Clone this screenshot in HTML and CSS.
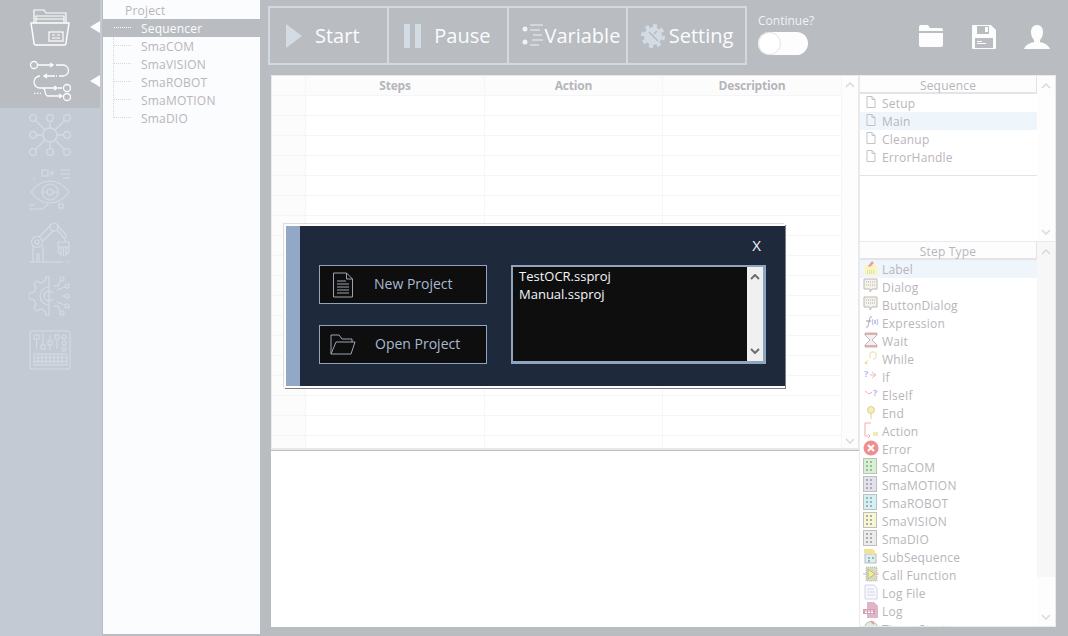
FILE: index.html
```html
<!DOCTYPE html>
<html lang="en">
<head>
<meta charset="utf-8">
<title>Sequencer</title>
<link rel="stylesheet" href="styles.css">
</head>
<body>
<div class="app">
  <nav class="rail">
    <div class="rail-item active">
      <svg class="rail-icon" viewBox="0 0 42 42" fill="none" stroke="currentColor" stroke-width="1.2"><path d="M5 17V4h10l2 3h20v10"/><path d="M7 17V10h28v7M7 13h28"/><path d="M2 17h38l-3 20a2 2 0 0 1-2 2H7a2 2 0 0 1-2-2z" stroke-width="1.5"/><rect x="20" y="26" width="14" height="9"/><path d="M23 29h3M28 29h3M23 32h8"/></svg>
    </div>
    <div class="rail-item active">
      <svg class="rail-icon" viewBox="0 0 42 42" fill="none" stroke="currentColor" stroke-width="1.3"><circle cx="5" cy="5" r="3.5"/><path d="M9 5h15M21 3l3 2-3 2M27 5h7a5.500 5.500 0 0 1 0 11h-4M18 14l-3 2 3 2M15 16h11M28 16h-1M11 16a6 6 0 0 0 0 12h17M25 26l3 2-3 2M29 28h4"/><path d="M14 28c3 0 1 8 5 8h14M30 34l3 2-3 2"/><path d="M5 33.300h7" stroke-dasharray="1.5 1.5"/><circle cx="38" cy="28" r="3.5"/><circle cx="38" cy="37" r="3.5"/></svg>
    </div>
    <div class="rail-item">
      <svg class="rail-icon dim" viewBox="0 0 42 42" fill="none" stroke="currentColor" stroke-width="1.3"><circle cx="21" cy="21" r="7"/><circle cx="4" cy="4" r="3.3"/><circle cx="21" cy="4" r="3.3"/><circle cx="38" cy="4" r="3.3"/><circle cx="4" cy="21" r="3.3"/><circle cx="38" cy="21" r="3.3"/><circle cx="4" cy="38" r="3.3"/><circle cx="21" cy="38" r="3.3"/><circle cx="38" cy="38" r="3.3"/><path d="M21 7v7M21 28v7M7 21h7M28 21h7M6.500 6.500l9.500 9.500M35.500 6.500l-9.500 9.500M6.500 35.500l9.500-9.500M35.500 35.500l-9.500-9.500"/></svg>
    </div>
    <div class="rail-item">
      <svg class="rail-icon dim" viewBox="0 0 42 42" fill="none" stroke="currentColor" stroke-width="1.2"><path d="M2 24c5-7 12-11 19-11s14 4 19 11c-5 7-12 11-19 11S7 31 2 24z"/><circle cx="21" cy="24" r="8"/><circle cx="21" cy="24" r="3"/><path d="M13 24h5M24 24h5"/><rect x="13" y="2" width="6" height="6"/><rect x="22" y="4" width="2" height="2"/><path d="M32 2h9M31 6h10M34 10h7M4 11h2M0 41h14l5-5M0 37h6"/><rect x="30" y="36" width="4" height="4"/></svg>
    </div>
    <div class="rail-item">
      <svg class="rail-icon dim" viewBox="0 0 42 42" fill="none" stroke="currentColor" stroke-width="1.2"><path d="M1 40h33M38 40h2M4 40V24M14 40V24M8 40v-8h2v8"/><circle cx="8" cy="20" r="5.500"/><circle cx="8" cy="20" r="2"/><path d="M10 15l12-12M14 19L25 8"/><circle cx="25" cy="5" r="4"/><path d="M28 8l8 9v3M28 3l9 10v3M29 20h11v5H29zM32 25v8l-3-3 1-5M37 25v8l3-3-1-5M34.500 25v9"/></svg>
    </div>
    <div class="rail-item">
      <svg class="rail-icon dim" viewBox="0 0 42 42" fill="none" stroke="currentColor" stroke-width="1.2"><path d="M20 1v38h-3l-1-4-4-2-4 2-3-3 2-4-2-4-5-1v-6l5-1 2-4-2-4 3-3 4 2 4-2 1-4z"/><path d="M20 11a9 9 0 0 0 0 18"/><path d="M20 15a5 5 0 0 0 0 10a5 5 0 0 0 4-2M20 15a5 5 0 0 1 4 2"/><circle cx="33" cy="3" r="2"/><circle cx="38" cy="10" r="2"/><circle cx="38" cy="20" r="2"/><circle cx="38" cy="30" r="2"/><circle cx="33" cy="37" r="2"/><path d="M31 5l-2 5h-5M36 11l-8 3M32 20h4M28 26l8 3M24 30h5l2 5"/></svg>
    </div>
    <div class="rail-item">
      <svg class="rail-icon dim" viewBox="0 0 42 42" fill="none" stroke="currentColor" stroke-width="1.1"><rect x="1" y="1" width="40" height="38" rx="2"/><rect x="5" y="5" width="5" height="4"/><rect x="12" y="15" width="4" height="4"/><rect x="19" y="11" width="4" height="4"/><rect x="26" y="5" width="4" height="4"/><circle cx="35" cy="7" r="2"/><circle cx="35" cy="13" r="2"/><circle cx="35" cy="19" r="2"/><path d="M7.500 9v10M14 3v12M21 5v6M21 15v5M28 9v10"/><path d="M5 24h33v11H5zM5 27.700h33M5 31.400h33M9 24v11M13 24v11M17 24v11M21 24v11M25 24v11M29 24v11M33 24v11"/></svg>
    </div>
  </nav>

  <aside class="tree">
    <div class="tree-root">Project</div>
    <ul class="tree-list">
      <li class="tree-row selected"><span>Sequencer</span></li>
      <li class="tree-row"><span>SmaCOM</span></li>
      <li class="tree-row"><span>SmaVISION</span></li>
      <li class="tree-row"><span>SmaROBOT</span></li>
      <li class="tree-row"><span>SmaMOTION</span></li>
      <li class="tree-row"><span>SmaDIO</span></li>
    </ul>
  </aside>

  <main class="main">
    <header class="topbar">
      <div class="toolbar">
        <button class="tool t-start"><svg class="tool-icon" viewBox="0 0 16 24"><path d="M0 0l16 12L0 24z"/></svg><span>Start</span></button>
        <button class="tool t-pause"><svg class="tool-icon pause" viewBox="0 0 18 24"><path d="M0 0h6v24H0zM11 0h6v24h-6z"/></svg><span>Pause</span></button>
        <button class="tool t-var"><svg class="tool-icon var" viewBox="0 0 22 24" fill="none" stroke="currentColor" stroke-width="1.2"><circle cx="3" cy="5" r="2.500" fill="currentColor" stroke="none"/><circle cx="3" cy="18" r="2.500" fill="currentColor" stroke="none"/><path d="M8 1h13M8 6h10M11 11h9M10 16h11M8 21h9"/></svg><span>Variable</span></button>
        <button class="tool t-set"><svg class="tool-icon gear" viewBox="0 0 24 24"><circle cx="12" cy="12" r="9"/><circle class="gear-teeth" cx="12" cy="12" r="10" pathLength="24" stroke-dasharray="1.500 1.500"/><path class="gear-cut" d="M8 8l9 9M16 7l-3 3"/></svg><span>Setting</span></button>
      </div>
      <div class="continue">
        <span class="continue-label">Continue?</span>
        <div class="toggle"><div class="knob"></div></div>
      </div>
      <div class="quick">
        <svg class="q-folder" viewBox="0 0 24 22"><path d="M0 2a2 2 0 0 1 2-2h7l2 3h11a2 2 0 0 1 2 2v1H0zM0 8h24v12a2 2 0 0 1-2 2H2a2 2 0 0 1-2-2z"/></svg>
        <svg class="q-save" viewBox="0 0 24 24"><path fill-rule="evenodd" d="M0 1a1 1 0 0 1 1-1h18l5 5v18a1 1 0 0 1-1 1H1a1 1 0 0 1-1-1zM5 1v8h12V1zM13 2h3v5h-3zM3 13v10h18V13zM5 16h5v1H5zM5 18h9v1H5z"/></svg>
        <svg class="q-user" viewBox="0 0 26 24"><path d="M13 0c4 0 6 3 6 7 0 3-1 6-3 8v2c3 1 8 2 10 7H0c2-5 7-6 10-7v-2c-2-2-3-5-3-8 0-4 2-7 6-7z"/></svg>
      </div>
    </header>

    <div class="workspace">
      <div class="center">
        <section class="steps">
          <table class="grid">
            <thead><tr><th class="corner"></th><th class="c-steps">Steps</th><th class="c-action">Action</th><th class="c-desc">Description</th></tr></thead>
            <tbody>
              <tr><td></td><td></td><td></td><td></td></tr>
              <tr><td></td><td></td><td></td><td></td></tr>
              <tr><td></td><td></td><td></td><td></td></tr>
              <tr><td></td><td></td><td></td><td></td></tr>
              <tr><td></td><td></td><td></td><td></td></tr>
              <tr><td></td><td></td><td></td><td></td></tr>
              <tr><td></td><td></td><td></td><td></td></tr>
              <tr><td></td><td></td><td></td><td></td></tr>
              <tr><td></td><td></td><td></td><td></td></tr>
              <tr><td></td><td></td><td></td><td></td></tr>
              <tr><td></td><td></td><td></td><td></td></tr>
              <tr><td></td><td></td><td></td><td></td></tr>
              <tr><td></td><td></td><td></td><td></td></tr>
              <tr><td></td><td></td><td></td><td></td></tr>
              <tr><td></td><td></td><td></td><td></td></tr>
              <tr><td></td><td></td><td></td><td></td></tr>
              <tr><td></td><td></td><td></td><td></td></tr>
              <tr><td></td><td></td><td></td><td></td></tr>
            </tbody>
          </table>
          <div class="vscroll">
            <svg class="chev" viewBox="0 0 10 6"><path d="M1 5l4-4 4 4"/></svg>
            <svg class="chev" viewBox="0 0 10 6"><path d="M1 1l4 4 4-4"/></svg>
          </div>
        </section>
        <section class="output"></section>
      </div>

      <div class="side">
        <section class="panel seq">
          <div class="panel-body">
            <div class="panel-head">Sequence</div>
            <ul class="items">
              <li class="item"><svg class="doc" viewBox="0 0 10 12"><path d="M1 .5h5l3 3v8H1zM6 .5v3h3"/></svg>Setup</li>
              <li class="item hot"><svg class="doc" viewBox="0 0 10 12"><path d="M1 .5h5l3 3v8H1zM6 .5v3h3"/></svg>Main</li>
              <li class="item"><svg class="doc" viewBox="0 0 10 12"><path d="M1 .5h5l3 3v8H1zM6 .5v3h3"/></svg>Cleanup</li>
              <li class="item"><svg class="doc" viewBox="0 0 10 12"><path d="M1 .5h5l3 3v8H1zM6 .5v3h3"/></svg>ErrorHandle</li>
            </ul>
            <div class="seq-rule"></div>
          </div>
          <div class="vscroll">
            <svg class="chev" viewBox="0 0 10 6"><path d="M1 5l4-4 4 4"/></svg>
            <svg class="chev" viewBox="0 0 10 6"><path d="M1 1l4 4 4-4"/></svg>
          </div>
        </section>

        <section class="panel types">
          <div class="panel-body">
            <div class="panel-head">Step Type</div>
            <ul class="items">
              <li class="item hot"><svg class="si" viewBox="0 0 16 16"><rect x="2" y="5" width="12" height="10" fill="#fdf6a6"/><path d="M4 11h8M4 13h8" stroke="#bbb" stroke-dasharray="1 1"/><path d="M5 6l4-5 2 2-4 4z" fill="#e58a94"/></svg>Label</li>
              <li class="item"><svg class="si" viewBox="0 0 16 16"><path d="M1 1h13v10H9l-2 3v-3H1z" fill="#f4f1e6" stroke="#aaa"/><path d="M3 4h9M3 7h9" stroke="#999" stroke-dasharray="1 1"/></svg>Dialog</li>
              <li class="item"><svg class="si" viewBox="0 0 16 16"><path d="M1 1h13v10H9l-2 3v-3H1z" fill="#f4f1e6" stroke="#aaa"/><path d="M3 4h9M3 7h9" stroke="#999" stroke-dasharray="1 1"/></svg>ButtonDialog</li>
              <li class="item"><svg class="si" viewBox="0 0 16 16" fill="none"><path d="M3 13c2 1 2-1 3-5s1-6 3-5M3 7h5" stroke="#888"/><path d="M10 5c-1 2-1 4 0 6M14 5c1 2 1 4 0 6M11 6l2 4M13 6l-2 4" stroke="#a6a6e8"/></svg>Expression</li>
              <li class="item"><svg class="si" viewBox="0 0 16 16"><path d="M2 1h12v2l-5 5 5 5v2H2v-2l5-5-5-5V1z" fill="#eee" stroke="#aaa"/><path d="M2 1h12v2H2zM2 13h12v2H2z" fill="#d99"/></svg>Wait</li>
              <li class="item"><svg class="si" viewBox="0 0 16 16" fill="none" stroke="#e9d58e"><path d="M7 8V4a2 2 0 0 1 2-2h2a2 2 0 0 1 2 2v3a2 2 0 0 1-2 2h-1M2 13l3-3"/><circle cx="3" cy="13" r="1" fill="#e9d58e"/></svg>While</li>
              <li class="item"><svg class="si" viewBox="0 0 16 16" fill="none"><text class="qm" x="1" y="9">?</text><path d="M9 4l4 3-4 3M7 7h5" stroke="#f2a8a8"/></svg>If</li>
              <li class="item"><svg class="si" viewBox="0 0 16 16" fill="none"><path d="M2 5l4 3 3-2M7 8l2-2" stroke="#f2a8a8"/><text class="qm" x="10" y="10">?</text></svg>ElseIf</li>
              <li class="item"><svg class="si" viewBox="0 0 16 16"><circle cx="8" cy="6" r="3.500" fill="#f5e9a8" stroke="#d8c67a"/><path d="M8 9v6" stroke="#d8c67a"/></svg>End</li>
              <li class="item"><svg class="si" viewBox="0 0 16 16" fill="none"><path d="M8 1H2v13h3" stroke="#ef9b9b"/><path d="M5 12l2 2-2 2" stroke="#ef9b9b"/><rect x="10" y="10" width="5" height="4" fill="#f1e6a0"/></svg>Action</li>
              <li class="item"><svg class="si big" viewBox="0 0 16 16"><circle cx="8" cy="8" r="7.500" fill="#ef8f8f"/><path d="M5 5l6 6M11 5l-6 6" stroke="#fff" stroke-width="2"/></svg>Error</li>
              <li class="item"><svg class="si" viewBox="0 0 16 16"><rect x=".5" y=".5" width="13" height="15" fill="#c9efc4" stroke="#b0b0b0"/><path d="M3 3h2v2H3zM7 3h2v2H7zM3 7h2v2H3zM7 7h2v2H7zM3 11h2v2H3zM7 11h2v2H7z" fill="#999"/></svg>SmaCOM</li>
              <li class="item"><svg class="si" viewBox="0 0 16 16"><rect x=".5" y=".5" width="13" height="15" fill="#dcdcec" stroke="#b0b0b0"/><path d="M3 3h2v2H3zM7 3h2v2H7zM3 7h2v2H3zM7 7h2v2H7zM3 11h2v2H3zM7 11h2v2H7z" fill="#999"/></svg>SmaMOTION</li>
              <li class="item"><svg class="si" viewBox="0 0 16 16"><rect x=".5" y=".5" width="13" height="15" fill="#c5f0f5" stroke="#b0b0b0"/><path d="M3 3h2v2H3zM7 3h2v2H7zM3 7h2v2H3zM7 7h2v2H7zM3 11h2v2H3zM7 11h2v2H7z" fill="#999"/></svg>SmaROBOT</li>
              <li class="item"><svg class="si" viewBox="0 0 16 16"><rect x=".5" y=".5" width="13" height="15" fill="#f8f6c8" stroke="#b0b0b0"/><path d="M3 3h2v2H3zM7 3h2v2H7zM3 7h2v2H3zM7 7h2v2H7zM3 11h2v2H3zM7 11h2v2H7z" fill="#999"/></svg>SmaVISION</li>
              <li class="item"><svg class="si" viewBox="0 0 16 16"><rect x=".5" y=".5" width="13" height="15" fill="#e8e8e8" stroke="#b0b0b0"/><path d="M3 3h2v2H3zM7 3h2v2H7zM3 7h2v2H3zM7 7h2v2H7zM3 11h2v2H3zM7 11h2v2H7z" fill="#999"/></svg>SmaDIO</li>
              <li class="item"><svg class="si" viewBox="0 0 16 16"><rect x="2" y="6" width="11" height="9" fill="#cdeef2" stroke="#aaa"/><path d="M1 1h7a4 4 0 0 1 4 4v3l-3-1V5H1z" fill="#f3dc6e"/><path d="M5 9h2v2H5zM9 9h2v2H9zM5 12h2v2H5z" fill="#999"/></svg>SubSequence</li>
              <li class="item"><svg class="si" viewBox="0 0 16 16"><rect x="3" y="1" width="11" height="14" fill="#cfd2b6" stroke="#aaa" stroke-dasharray="1 1"/><path d="M5 3l7 5-7 5z" fill="#f5e77a" stroke="#9cb06e"/><path d="M0 8h5" stroke="#a9a9ef"/><path d="M11 8h5" stroke="#ef9b9b"/></svg>Call Function</li>
              <li class="item"><svg class="si" viewBox="0 0 16 16"><path d="M2 1h9l3 3v11H2z" fill="#f7f8fd" stroke="#c6cce6"/><path d="M4 5h7M4 8h8M4 11h8" stroke="#c6cce6"/></svg>Log File</li>
              <li class="item"><svg class="si" viewBox="0 0 16 16"><path d="M4 0h7l4 4v12H4z" fill="#d8a3bb"/><rect x="0" y="7" width="12" height="5" fill="#c98aa6"/><path d="M2 9h8M2 10.500h8" stroke="#fff" stroke-dasharray="2 1"/></svg>Log</li>
              <li class="item"><svg class="si" viewBox="0 0 16 16"><circle cx="8" cy="8" r="6.500" fill="#d9ead3" stroke="#aaa"/><path d="M8 1l3 3" stroke="#e08a8a" stroke-width="2"/></svg>Timer Start</li>
            </ul>
          </div>
          <div class="vscroll thumbed">
            <svg class="chev" viewBox="0 0 10 6"><path d="M1 5l4-4 4 4"/></svg>
            <svg class="chev" viewBox="0 0 10 6"><path d="M1 1l4 4 4-4"/></svg>
          </div>
        </section>
      </div>
    </div>
  </main>
</div>

<div class="dialog">
  <div class="dialog-strip"></div>
  <div class="dialog-main">
    <div class="dialog-close">X</div>
    <div class="dialog-body">
      <div class="dialog-actions">
        <button class="project-btn">
          <svg class="pb-icon" viewBox="0 0 22 26" fill="none" stroke="currentColor"><path d="M1.500 1h13l6 6v18h-19zM14.500 1v6h6"/><path d="M5 9h9M5 12h12M5 15h12M5 18h12M5 21h12"/></svg>
          <span class="pb-new">New Project</span>
        </button>
        <button class="project-btn">
          <svg class="pb-icon wide" viewBox="0 0 26 22" fill="none" stroke="currentColor"><path d="M1 20V1h8l3 4h10v3"/><path d="M1 20l5-12h19l-4 12z"/></svg>
          <span class="pb-open">Open Project</span>
        </button>
      </div>
      <div class="recent">
        <ul class="recent-list">
          <li>TestOCR.ssproj</li>
          <li>Manual.ssproj</li>
        </ul>
        <div class="recent-scroll">
          <svg class="chev dark" viewBox="0 0 10 6"><path d="M1 5l4-4 4 4"/></svg>
          <svg class="chev dark" viewBox="0 0 10 6"><path d="M1 1l4 4 4-4"/></svg>
        </div>
      </div>
    </div>
  </div>
</div>
</body>
</html>
```
FILE: styles.css
```css
* { box-sizing: border-box; }
html, body { margin: 0; padding: 0; }
body {
  width: 1068px;
  height: 636px;
  overflow: hidden;
  background: #b9bcc1;
  font-family: "Open Sans", "Noto Sans", sans-serif;
  font-size: 12px;
  color: #b9b5bb;
}
ul { list-style: none; margin: 0; padding: 0; }
button { font: inherit; background: none; cursor: default; }

.app { display: flex; height: 636px; }

/* left rail */
.rail { width: 102px; background: #c3cad4; flex: none; }
.rail-item { height: 54px; width: 100px; display: flex; align-items: center; justify-content: center; position: relative; }
.rail-item.active { background: #b9bcc1; color: #fdfdfe; }
.rail-item.active::after {
  content: "";
  position: absolute;
  right: 0;
  top: 21px;
  border-style: solid;
  border-width: 6px 10px 6px 0;
  border-color: transparent #fdfdfe transparent transparent;
}
.rail-icon { width: 42px; height: 42px; display: block; }
.rail-icon.dim { color: #d5dbe3; }

/* tree */
.tree { width: 157px; margin: 0 0 2px 1px; background: #fbfcfe; flex: none; padding-top: 2px; position: relative; letter-spacing: .2px; }
.tree-root { height: 17px; line-height: 17px; padding-left: 22px; }
.tree-row { height: 18px; line-height: 20px; padding-left: 38px; position: relative; }
.tree-row::before {
  content: "";
  position: absolute;
  left: 11px;
  top: 8px;
  width: 17px;
  border-top: 1px dotted #d5d7dc;
}
.tree-list { position: relative; }
.tree-list::before {
  content: "";
  position: absolute;
  left: 10px;
  top: 0;
  height: 99px;
  border-left: 1px dotted #d5d7dc;
}
.tree-row.selected { background: #b9bcc1; color: #fdfdfe; }
.tree-row.selected::before { border-top-color: #fdfdfe; }

/* main */
.main { flex: 1; min-width: 0; display: flex; flex-direction: column; }
.topbar { height: 75px; flex: none; display: flex; padding: 6px 18px 0 8px; }
.toolbar { width: 479px; height: 59px; border: 1px solid #d3d9e0; display: flex; flex: none; }
.tool {
  flex: 0 0 25%;
  min-width: 0;
  border: 1px solid #d3d9e0;
  padding: 0;
  display: flex;
  align-items: center;
  color: #fbfcfd;
  font-size: 20px;
  font-weight: 500;
  white-space: nowrap;
}
.t-start { padding-left: 16px; gap: 13px; }
.t-pause { padding-left: 15px; gap: 12px; }
.t-var { padding-left: 13px; gap: 1px; }
.t-set { padding-left: 13px; gap: 4px; }
.tool-icon { width: 16px; height: 24px; fill: #d3dbe4; flex: none; color: #eef1f5; }
.tool-icon.pause { width: 18px; }
.tool-icon.var { width: 22px; fill: none; }
.tool-icon.gear { width: 24px; }
.gear-teeth { fill: none; stroke: #d3dbe4; stroke-width: 4; }
.gear-cut { fill: none; stroke: #b9bcc1; stroke-width: 1.6; }

.continue { width: 60px; margin-left: 11px; flex: none; display: flex; flex-direction: column; padding-top: 6px; }
.continue-label { height: 20px; line-height: 18px; color: #f1f2f4; font-size: 12px; white-space: nowrap; }
.toggle { width: 50px; height: 23px; border-radius: 12px; background: #fdfdfd; }
.knob { width: 23px; height: 23px; border-radius: 50%; background: #fff; border: 1px solid #e4e4e4; }

.quick { display: flex; margin-left: auto; gap: 29px; padding-top: 19px; align-items: flex-start; }
.quick svg { fill: #fdfdfe; display: block; }
.q-folder { width: 24px; height: 22px; }
.q-save { width: 24px; height: 24px; }
.q-user { width: 26px; height: 24px; margin-left: -1px; }

.workspace { flex: 1; display: flex; margin: 0 12px 9px 11px; min-height: 0; }
.center { width: 588px; flex: none; display: flex; flex-direction: column; gap: 1px; }
.steps { height: 375px; flex: none; background: #fff; border: 1px solid #e9e9ec; border-bottom-width: 2px; display: flex; overflow: hidden; }
.output { flex: 1; background: #fff; }

.grid { width: 570px; flex: none; border-collapse: separate; border-spacing: 0; table-layout: fixed; height: 0; }
.grid th, .grid td { padding: 0; border-right: 1px solid #f6f6f7; border-bottom: 1px solid #f5f5f6; }
.grid thead th { height: 20px; background: #fcfcfc; color: #b5b5ba; font-size: 12px; font-weight: 700; letter-spacing: -.2px; }
.grid .corner { width: 34px; }
.grid .c-steps { width: 179px; }
.grid .c-action { width: 178px; }
.grid .c-desc { width: 179px; }
.grid td { height: 20px; }
.grid td:first-child { background: #fcfcfc; }

.vscroll { width: 16px; flex: none; display: flex; flex-direction: column; justify-content: space-between; align-items: center; padding: 6px 0 4px; background: #fdfdfd; }
.chev { width: 10px; height: 6px; fill: none; stroke: #d9dadc; stroke-width: 1.5; display: block; }
.chev.dark { stroke: #6d6d6d; stroke-width: 2; }

.side { width: 197px; flex: none; display: flex; flex-direction: column; gap: 1px; background: #e9eaec; border: 1px solid #e9eaec; letter-spacing: .2px; }
.side .vscroll { width: 18px; padding: 7px 0 6px; }
.panel { display: flex; background: #fff; overflow: hidden; min-height: 0; }
.panel.seq { height: 165px; flex: none; }
.panel.types { flex: 1; }
.panel-body { flex: 1; min-width: 0; display: flex; flex-direction: column; position: relative; }
.panel-head { height: 18px; flex: none; line-height: 19px; text-align: center; background: #fdfdfd; border-bottom: 2px solid #e4e4e6; border-right: 1px solid #e4e4e6; }
.items { flex: none; }
.item { height: 18px; line-height: 20px; display: flex; align-items: flex-start; white-space: nowrap; padding-left: 3px; }
.seq .item { padding-left: 6px; }
.item.hot { background: #eef6fc; }
.doc { width: 10px; height: 12px; margin: 2px 6px 0 0; fill: none; stroke: #c3c3c6; flex: none; }
.si { width: 16px; height: 16px; margin-right: 3px; flex: none; opacity: .8; }
.si.big { opacity: 1; }
.qm { font-size: 9px; fill: #a6a6ee; font-weight: 700; }
.seq-rule { margin-top: 9px; border-top: 1px solid #e4e4e6; }
.vscroll.thumbed { position: relative; background: #f7f7f7; }
.vscroll.thumbed::after { content: ""; position: absolute; left: 0; right: 0; top: 335px; bottom: 0; background: #fdfdfd; z-index: 0; }
.vscroll.thumbed .chev { position: relative; z-index: 1; }

/* dialog overlay */
.dialog {
  position: absolute;
  left: 284px;
  top: 224px;
  width: 501px;
  height: 164px;
  display: flex;
  border: 2px solid #fdfdfd;
  box-shadow: -1px -1px 0 #dcdcdc, 1px 1px 0 #7d7f84;
}
.dialog-strip { width: 14px; background: #92a8c6; flex: none; }
.dialog-main { flex: 1; background: #1e2a3b; padding: 39px 19px 0 19px; display: flex; flex-direction: column; position: relative; }
.dialog-close { position: absolute; right: 21px; top: 9px; font-size: 15px; color: #f4f6f8; line-height: 20px; margin-right: 3px; }
.dialog-body { display: flex; gap: 24px; }
.dialog-actions { width: 168px; flex: none; display: flex; flex-direction: column; gap: 21px; }
.project-btn {
  height: 39px;
  width: 168px;
  background: #0e0e0f;
  border: 1px solid #8ea5c0;
  color: #a9bacf;
  font-size: 14px;
  display: flex;
  align-items: center;
  padding: 0 0 2px 12px;
}
.pb-icon { width: 22px; height: 26px; flex: none; color: #9aa4b2; margin-top: 2px; }
.pb-icon.wide { width: 26px; height: 22px; margin-left: -2px; }
.pb-new { margin-left: 20px; }
.pb-open { margin-left: 19px; }

.recent { width: 255px; height: 99px; flex: none; border: 2px solid #8ea5c0; border-bottom-width: 3px; border-right-width: 3px; background: #0e0e0f; display: flex; }
.recent-list { flex: 1; padding: 0 0 0 6px; color: #f4f6fa; font-size: 13px; line-height: 18px; }
.recent-scroll { width: 16px; flex: none; background: #f0f0f0; display: flex; flex-direction: column; justify-content: space-between; align-items: center; padding: 7px 0; }
```
